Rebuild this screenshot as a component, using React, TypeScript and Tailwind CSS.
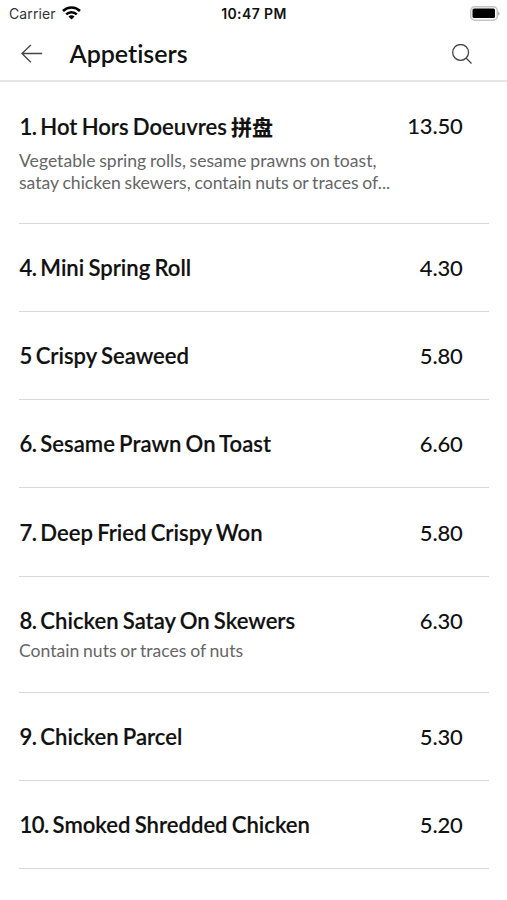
interface MenuItem {
  no: string
  name: string
  zh?: string
  price: string
  lines?: string[]
}

const items: MenuItem[] = [
  {
    no: '1.',
    name: 'Hot Hors Doeuvres',
    zh: '拼盘',
    price: '13.50',
    lines: ['Vegetable spring rolls, sesame prawns on toast,', 'satay chicken skewers, contain nuts or traces of...'],
  },
  { no: '4.', name: 'Mini Spring Roll', price: '4.30' },
  { no: '5', name: 'Crispy Seaweed', price: '5.80' },
  { no: '6.', name: 'Sesame Prawn On Toast', price: '6.60' },
  { no: '7.', name: 'Deep Fried Crispy Won', price: '5.80' },
  { no: '8.', name: 'Chicken Satay On Skewers', price: '6.30', lines: ['Contain nuts or traces of nuts'] },
  { no: '9.', name: 'Chicken Parcel', price: '5.30' },
  { no: '10.', name: 'Smoked Shredded Chicken', price: '5.20' },
]

function StatusBar() {
  return (
    <div className="grid h-7 grid-cols-3 items-center pr-[7px] pl-[9px] font-['Inter',sans-serif] text-sm text-[#111]">
      <div className="flex items-center gap-1.5">
        <span className="tracking-[0.1px] text-[#333]">Carrier</span>
        <svg className="-mt-0.5" width="19" height="14" viewBox="0 0 19 14" fill="none" stroke="#000" strokeWidth="2.6">
          <path d="M1 5a12.2 12.2 0 0 1 17 0" />
          <path d="M4.2 8.4a7.6 7.6 0 0 1 10.6 0" />
          <path d="M9.5 13.6 6.4 10.6a4.5 4.5 0 0 1 6.2 0Z" fill="#000" stroke="none" />
        </svg>
      </div>
      <span className="-ml-px text-center font-semibold tracking-[0.4px] whitespace-nowrap">10:47 PM</span>
      <svg className="-mt-0.5 justify-self-end" width="30" height="15" viewBox="0 0 30 15">
        <rect x="0.75" y="0.75" width="26.5" height="13.5" rx="4" fill="none" stroke="#c4c4c4" strokeWidth="1.5" />
        <rect x="2.5" y="2.5" width="22.5" height="9.5" rx="1.5" />
        <path d="M28.2 5.2c1.8.8 1.8 3.8 0 4.6Z" fill="#aaa" />
      </svg>
    </div>
  )
}

function Header() {
  return (
    <header className="flex h-[54px] items-center border-b-2 border-[#e6e6e6] pr-[35px] pl-[21px]">
      <svg width="22" height="20" viewBox="0 0 22 20" fill="none" stroke="#444" strokeWidth="1.3">
        <path d="M21.2 9.5H1M9.8 1 1 9.5l8.8 8.7" />
      </svg>
      <h1 className="ml-[26.5px] flex-1 text-[25px] font-semibold [font-variant-ligatures:none]">Appetisers</h1>
      <svg width="20" height="20" viewBox="0 0 20 20" fill="none" stroke="#444" strokeWidth="1.3">
        <circle cx="8.6" cy="8.4" r="7.9" />
        <path d="m14 14 5.5 5.5" />
      </svg>
    </header>
  )
}

function MenuRow({ item }: { item: MenuItem }) {
  return (
    <li className="border-b border-[#d8d8d8] pt-[30.2px] pr-[26.5px] pb-[28.95px]">
      <div className="flex justify-between text-[22px] leading-7">
        <h2
          className={`flex pl-[0.5px] text-[22.1px] font-semibold [word-spacing:-1.3px] whitespace-nowrap [-webkit-text-stroke:0.15px_#111] ${item.zh ? 'h-8 pt-px' : ''}`}
        >
          <span className="mr-1 tracking-[-0.6px]">{item.no}</span>
          <span>{item.name}</span>
          {item.zh && (
            <span className="-mt-px ml-1 font-['Noto_Sans_CJK_SC',sans-serif] text-[21px]">{item.zh}</span>
          )}
        </h2>
        <span className="font-medium tracking-[-0.2px]">{item.price}</span>
      </div>
      {item.lines && (
        <div className="pt-[5.5px] pb-[0.4px] text-[17.6px] leading-[22px] [word-spacing:-0.8px] whitespace-nowrap text-[#666]">
          {item.lines.map((line) => (
            <p key={line}>{line}</p>
          ))}
        </div>
      )}
    </li>
  )
}

export default function App() {
  return (
    <main className="h-[900px] w-[507px] overflow-hidden bg-white font-['Lato',sans-serif] text-[#111]">
      <StatusBar />
      <Header />
      <ul className="mr-[18px] ml-[19px]">
        {items.map((item) => (
          <MenuRow key={item.no} item={item} />
        ))}
      </ul>
    </main>
  )
}
